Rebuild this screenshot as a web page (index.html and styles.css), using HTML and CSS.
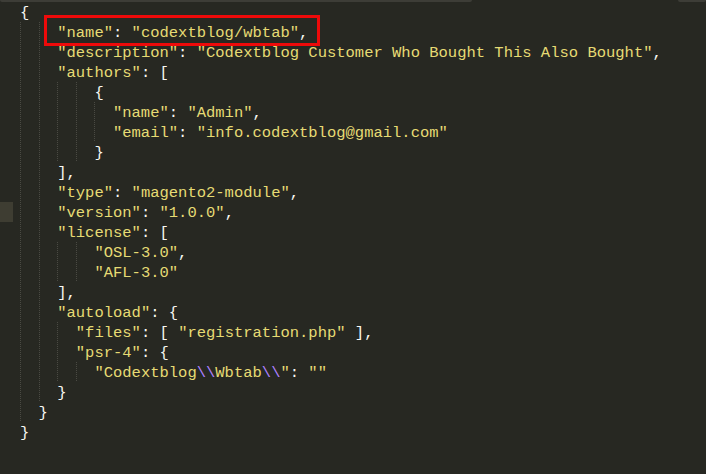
FILE: index.html
```html
<!DOCTYPE html>
<html>
<head>
<meta charset="utf-8">
<link rel="stylesheet" href="styles.css">
</head>
<body>
<div class="editor">
  <div class="topbar"><span class="seg seg-left"></span><span class="seg seg-right"></span></div>
  <div class="code">
    <div class="ln"><span class="gut"></span><span class="p">{</span></div>
    <div class="ln"><span class="gut"></span><span class="g"></span><span class="g"></span><span class="hl"><span class="s">"name"</span><span class="p">: </span><span class="s">"codextblog/wbtab"</span><span class="p">,</span></span></div>
    <div class="ln"><span class="gut"></span><span class="g"></span><span class="g"></span><span class="s">"description"</span><span class="p">: </span><span class="s">"Codextblog Customer Who Bought This Also Bought"</span><span class="p">,</span></div>
    <div class="ln"><span class="gut"></span><span class="g"></span><span class="g"></span><span class="s">"authors"</span><span class="p">: [</span></div>
    <div class="ln"><span class="gut"></span><span class="g"></span><span class="g"></span><span class="g"></span><span class="g"></span><span class="p">{</span></div>
    <div class="ln"><span class="gut"></span><span class="g"></span><span class="g"></span><span class="g"></span><span class="g"></span><span class="g"></span><span class="s">"name"</span><span class="p">: </span><span class="s">"Admin"</span><span class="p">,</span></div>
    <div class="ln"><span class="gut"></span><span class="g"></span><span class="g"></span><span class="g"></span><span class="g"></span><span class="g"></span><span class="s">"email"</span><span class="p">: </span><span class="s">"info.codextblog@gmail.com"</span></div>
    <div class="ln"><span class="gut"></span><span class="g"></span><span class="g"></span><span class="g"></span><span class="g"></span><span class="p">}</span></div>
    <div class="ln"><span class="gut"></span><span class="g"></span><span class="g"></span><span class="p">],</span></div>
    <div class="ln"><span class="gut"></span><span class="g"></span><span class="g"></span><span class="s">"type"</span><span class="p">: </span><span class="s">"magento2-module"</span><span class="p">,</span></div>
    <div class="ln"><span class="gut active"></span><span class="g"></span><span class="g"></span><span class="s">"version"</span><span class="p">: </span><span class="s">"1.0.0"</span><span class="p">,</span></div>
    <div class="ln"><span class="gut"></span><span class="g"></span><span class="g"></span><span class="s">"license"</span><span class="p">: [</span></div>
    <div class="ln"><span class="gut"></span><span class="g"></span><span class="g"></span><span class="g"></span><span class="g"></span><span class="s">"OSL-3.0"</span><span class="p">,</span></div>
    <div class="ln"><span class="gut"></span><span class="g"></span><span class="g"></span><span class="g"></span><span class="g"></span><span class="s">"AFL-3.0"</span></div>
    <div class="ln"><span class="gut"></span><span class="g"></span><span class="g"></span><span class="p">],</span></div>
    <div class="ln"><span class="gut"></span><span class="g"></span><span class="g"></span><span class="s">"autoload"</span><span class="p">: {</span></div>
    <div class="ln"><span class="gut"></span><span class="g"></span><span class="g"></span><span class="g"></span><span class="s">"files"</span><span class="p">: [ </span><span class="s">"registration.php"</span><span class="p"> ],</span></div>
    <div class="ln"><span class="gut"></span><span class="g"></span><span class="g"></span><span class="g"></span><span class="s">"psr-4"</span><span class="p">: {</span></div>
    <div class="ln"><span class="gut"></span><span class="g"></span><span class="g"></span><span class="g"></span><span class="g"></span><span class="s">"Codextblog<span class="e">\\</span>Wbtab<span class="e">\\</span>"</span><span class="p">: </span><span class="s">""</span></div>
    <div class="ln"><span class="gut"></span><span class="g"></span><span class="g"></span><span class="p">}</span></div>
    <div class="ln"><span class="gut"></span><span class="g"></span><span class="p">}</span></div>
    <div class="ln"><span class="gut"></span><span class="p">}</span></div>
  </div>
</div>
</body>
</html>
```

FILE: styles.css
```css
html, body {
  margin: 0;
  padding: 0;
  background: #272822;
}
.editor {
  width: 706px;
  height: 474px;
  background: #272822;
  overflow: hidden;
}
.topbar {
  display: flex;
  justify-content: space-between;
  height: 2px;
}
.seg {
  display: block;
  height: 2px;
  background: #3d3d37;
  border-radius: 0 0 2px 2px;
}
.seg-left { width: 472px; }
.seg-right { width: 28px; }
.code {
  font-family: "Liberation Mono", "DejaVu Sans Mono", monospace;
  font-size: 15.5px;
  line-height: 20px;
  color: #f8f8f2;
}
.ln {
  display: flex;
  height: 20px;
  white-space: pre;
}
.gut {
  width: 13px;
  margin-right: 7px;
  flex: none;
}
.gut.active {
  background: #3e3d32;
}
.g {
  display: inline-block;
  width: 2ch;
  height: 20px;
  flex: none;
  background-image: linear-gradient(#4a4a43 50%, transparent 50%);
  background-size: 1px 2px;
  background-repeat: repeat-y;
  background-position: 0 0;
}
.s, .p, .e {
  position: relative;
  top: 1px;
}
.s .e { top: 0; }
.s { color: #e6db74; }
.p { color: #f8f8f2; }
.e { color: #ae81ff; }
.hl {
  position: relative;
  display: inline-block;
  height: 20px;
}
.hl::after {
  content: "";
  position: absolute;
  left: -13px;
  right: -12px;
  top: -7px;
  bottom: -4px;
  border: 3px solid #ee0a0a;
}
```
